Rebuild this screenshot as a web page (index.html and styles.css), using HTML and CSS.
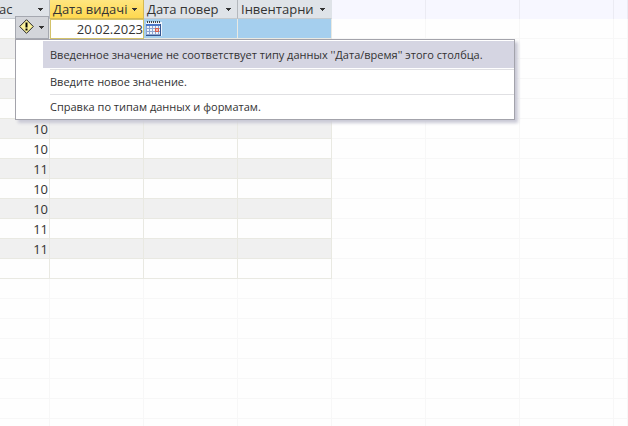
FILE: index.html
```html
<!DOCTYPE html>
<html lang="uk">
<head>
<meta charset="utf-8">
<title>Дата видачі</title>
<link rel="stylesheet" href="styles.css">
</head>
<body>
<main class="sheet">
<table class="grid">
<colgroup><col class="col-first"><col class="col"><col class="col"><col class="col"><col class="col"><col class="col"><col class="col"><col></colgroup>
<thead>
<tr>
<th class="head"><div class="head-box head-box-first"><span>ас</span><button class="arrow" aria-label="ас"></button></div></th>
<th class="head head-active"><div class="head-box"><span>Дата видачі</span><button class="arrow" aria-label="Дата видачі"></button></div></th>
<th class="head"><div class="head-box"><span>Дата повер</span><button class="arrow" aria-label="Дата повер"></button></div></th>
<th class="head"><div class="head-box"><span>Інвентарни</span><button class="arrow" aria-label="Інвентарни"></button></div></th>
<th></th><th></th><th></th><th></th>
</tr>
</thead>
<tbody class="data">
<tr class="current"><td></td><td class="editing"><input class="date" type="text" value="20.02.2023" aria-label="Дата видачі"></td><td><button class="calendar" aria-label="Календар"><svg width="16" height="16" viewBox="0 0 16 16" shape-rendering="crispEdges"><path fill="#eef4fc" d="M0 1h16v14H0z"/><path fill="#444" d="M1 0h1v2H1zM3 0h1v2H3zM5 0h1v2H5zM7 0h1v2H7zM9 0h1v2H9zM11 0h1v2h-1zM13 0h1v2h-1z"/><path fill="#4a76c8" d="M0 3h15v2H0z"/><path fill="#8fa5d0" d="M0 5h1v10H0zM3 5h1v9H3zM6 5h1v9H6zM9 5h1v9H9zM12 5h1v9h-1zM1 7h13v1H1zM1 10h13v1H1zM1 13h13v1H1z"/><path fill="#d4604f" d="M9 7h4v4H9z"/><path fill="#f0b9b4" d="M10 8h2v2h-2z"/><path fill="#34558f" d="M0 14h15v1H0zM14 3h1v12h-1z"/></svg></button></td><td></td><td></td><td></td><td></td><td></td></tr>
<tr><td></td><td></td><td></td><td></td><td></td><td></td><td></td><td></td></tr>
<tr><td></td><td></td><td></td><td></td><td></td><td></td><td></td><td></td></tr>
<tr><td></td><td></td><td></td><td></td><td></td><td></td><td></td><td></td></tr>
<tr><td></td><td></td><td></td><td></td><td></td><td></td><td></td><td></td></tr>
<tr><td>10</td><td></td><td></td><td></td><td></td><td></td><td></td><td></td></tr>
<tr><td>10</td><td></td><td></td><td></td><td></td><td></td><td></td><td></td></tr>
<tr><td>11</td><td></td><td></td><td></td><td></td><td></td><td></td><td></td></tr>
<tr><td>10</td><td></td><td></td><td></td><td></td><td></td><td></td><td></td></tr>
<tr><td>10</td><td></td><td></td><td></td><td></td><td></td><td></td><td></td></tr>
<tr><td>11</td><td></td><td></td><td></td><td></td><td></td><td></td><td></td></tr>
<tr><td>11</td><td></td><td></td><td></td><td></td><td></td><td></td><td></td></tr>
<tr><td></td><td></td><td></td><td></td><td></td><td></td><td></td><td></td></tr>
</tbody>
<tbody>
<tr><td></td><td></td><td></td><td></td><td></td><td></td><td></td><td></td></tr>
<tr><td></td><td></td><td></td><td></td><td></td><td></td><td></td><td></td></tr>
<tr><td></td><td></td><td></td><td></td><td></td><td></td><td></td><td></td></tr>
<tr><td></td><td></td><td></td><td></td><td></td><td></td><td></td><td></td></tr>
<tr><td></td><td></td><td></td><td></td><td></td><td></td><td></td><td></td></tr>
<tr><td></td><td></td><td></td><td></td><td></td><td></td><td></td><td></td></tr>
<tr><td></td><td></td><td></td><td></td><td></td><td></td><td></td><td></td></tr>
<tr><td></td><td></td><td></td><td></td><td></td><td></td><td></td><td></td></tr>
</tbody>
</table>
<div class="alert">
<button class="alert-button" aria-label="Помилка" aria-expanded="true"><svg width="15" height="15" viewBox="0 0 15 15"><path fill="#fbf29c" stroke="#222" d="M7.500.7 14.300 7.500 7.500 14.300.7 7.500z"/><path fill="#000" d="M6.500 3.500h2v5h-2zM6.500 9.500h2v2h-2z"/></svg><span class="arrow"></span></button>
<div class="menu" role="menu">
<button class="item item-active" role="menuitem">Введенное значение не соответствует типу данных ''Дата/время'' этого столбца.</button>
<button class="item" role="menuitem">Введите новое значение.</button>
<button class="item" role="menuitem">Справка по типам данных и форматам.</button>
</div>
</div>
</main>
</body>
</html>
```
FILE: styles.css
```css
* {
  box-sizing: border-box;
}

body {
  margin: 0;
  background: #fefefe;
  color: #333;
  font-family: "Open Sans", "Noto Sans", sans-serif;
  font-size: 13px;
}

button,
input {
  margin: 0;
  padding: 0;
  border: 0;
  background: none;
  color: inherit;
  font: inherit;
}

.sheet {
  position: relative;
  height: 100vh;
  overflow: hidden;
}

.grid {
  width: 100%;
  table-layout: fixed;
  border-collapse: separate;
  border-spacing: 0;
}

.col-first {
  width: 50px;
}

.col {
  width: 94px;
}

th {
  height: 19px;
  padding: 0;
  border-right: 1px solid #ebebf3;
  background: #f7f7ff;
  font-weight: normal;
  line-height: 18px;
}

.head {
  border-right-color: #b4b8bd;
  border-bottom: 1px solid #c5cace;
  background: #dfe3e8;
}

.head:nth-child(4) {
  border-right-color: #dfe3e8;
}

.head-active {
  border-color: #d5b951;
  background: linear-gradient(#ffe680, #ffd84f);
}

.head-box {
  display: flex;
  align-items: center;
  justify-content: space-between;
  padding: 0 3px;
  white-space: nowrap;
}

.head-box-first {
  margin-left: -4px;
}

.arrow {
  display: block;
  width: 11px;
  height: 8px;
  background: linear-gradient(#333, #333) center 3px / 5px 1px no-repeat,
    linear-gradient(#333, #333) center 4px / 3px 1px no-repeat,
    linear-gradient(#333, #333) center 5px / 1px 1px no-repeat;
}

td {
  height: 20px;
  padding: 0 1px;
  border-right: 1px solid #f7f7f7;
  border-bottom: 1px solid #f7f7f7;
  line-height: 19px;
  text-align: right;
}

.data td:nth-child(-n+4) {
  border-color: #e9e9e2;
  background: #fefefe;
}

.data td:first-child {
  padding: 1px 1px 0;
  line-height: 18px;
}

.data tr:nth-child(even) td:nth-child(-n+4) {
  background: #f0f0f0;
}

.data .current td:nth-child(3),
.data .current td:nth-child(4) {
  background: #a5cfee;
  text-align: left;
}

.data .current .editing {
  padding: 0;
  border: 1px solid #d3c269;
  background: #fff;
}

.date {
  display: block;
  width: 100%;
  height: 18px;
  text-align: right;
}

.calendar {
  display: block;
  margin-left: 1px;
}

.calendar svg {
  display: block;
}

.alert {
  position: absolute;
  top: 16px;
  left: 15px;
}

.alert-button {
  display: flex;
  align-items: center;
  justify-content: space-between;
  width: 34px;
  height: 23px;
  padding: 0 1px 2px 3px;
  border: 1px solid #a5a8b0;
  background: #d3d5da;
}

.menu {
  display: flex;
  flex-direction: column;
  width: 500px;
  max-width: calc(100vw - 15px);
  padding: 1px 0 0 27px;
  border: 1px solid #a3a3ab;
  background: #fff;
  box-shadow: 3px 3px 3px #c9c9d6;
}

.item {
  height: 25px;
  margin-left: 7px;
  padding-bottom: 2px;
  border-top: 1px solid #e0e0e3;
  font-size: 11px;
  text-align: left;
  white-space: nowrap;
}

.item-active {
  height: 27px;
  margin: 0 0 1px;
  padding: 0 7px;
  border-top: 0;
  background: #d5d5e2;
}
```
